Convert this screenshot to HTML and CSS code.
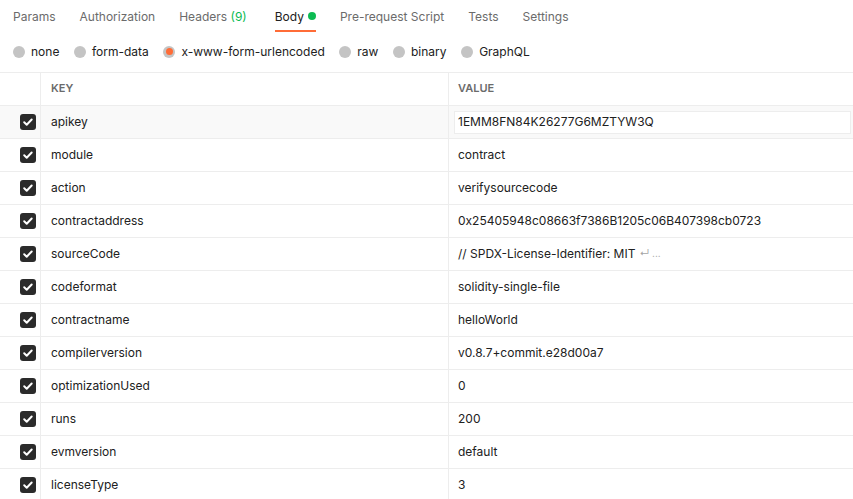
FILE: index.html
```html
<!DOCTYPE html>
<html>
<head>
<meta charset="utf-8">
<link rel="stylesheet" href="styles.css">
</head>
<body>
<div class="tabs">
  <div class="tab">Params</div>
  <div class="tab">Authorization</div>
  <div class="tab">Headers <span class="count">(9)</span></div>
  <div class="tab active">Body<span class="dot"></span></div>
  <div class="tab">Pre-request Script</div>
  <div class="tab">Tests</div>
  <div class="tab">Settings</div>
</div>
<div class="radios">
  <label class="radio"><span class="circle"></span>none</label>
  <label class="radio"><span class="circle"></span>form-data</label>
  <label class="radio"><span class="circle on"></span>x-www-form-urlencoded</label>
  <label class="radio"><span class="circle"></span>raw</label>
  <label class="radio"><span class="circle"></span>binary</label>
  <label class="radio"><span class="circle"></span>GraphQL</label>
</div>
<div class="table">
  <div class="row head">
    <div class="cell chk"></div>
    <div class="cell key">KEY</div>
    <div class="cell val">VALUE</div>
  </div>
  <div class="row hover">
    <div class="cell chk"><span class="box"><svg viewBox="0 0 16 16"><path d="M4.2 8.3l2.5 2.4 5-5.2" fill="none" stroke="#fff" stroke-width="2" stroke-linecap="round" stroke-linejoin="round"/></svg></span></div>
    <div class="cell key">apikey</div>
    <div class="cell val"><span class="input">1EMM8FN84K26277G6MZTYW3Q</span></div>
  </div>
  <div class="row">
    <div class="cell chk"><span class="box"><svg viewBox="0 0 16 16"><path d="M4.2 8.3l2.5 2.4 5-5.2" fill="none" stroke="#fff" stroke-width="2" stroke-linecap="round" stroke-linejoin="round"/></svg></span></div>
    <div class="cell key">module</div>
    <div class="cell val">contract</div>
  </div>
  <div class="row">
    <div class="cell chk"><span class="box"><svg viewBox="0 0 16 16"><path d="M4.2 8.3l2.5 2.4 5-5.2" fill="none" stroke="#fff" stroke-width="2" stroke-linecap="round" stroke-linejoin="round"/></svg></span></div>
    <div class="cell key">action</div>
    <div class="cell val">verifysourcecode</div>
  </div>
  <div class="row">
    <div class="cell chk"><span class="box"><svg viewBox="0 0 16 16"><path d="M4.2 8.3l2.5 2.4 5-5.2" fill="none" stroke="#fff" stroke-width="2" stroke-linecap="round" stroke-linejoin="round"/></svg></span></div>
    <div class="cell key">contractaddress</div>
    <div class="cell val">0x25405948c08663f7386B1205c06B407398cb0723</div>
  </div>
  <div class="row">
    <div class="cell chk"><span class="box"><svg viewBox="0 0 16 16"><path d="M4.2 8.3l2.5 2.4 5-5.2" fill="none" stroke="#fff" stroke-width="2" stroke-linecap="round" stroke-linejoin="round"/></svg></span></div>
    <div class="cell key">sourceCode</div>
    <div class="cell val">// SPDX-License-Identifier: MIT <span class="more">↵ ...</span></div>
  </div>
  <div class="row">
    <div class="cell chk"><span class="box"><svg viewBox="0 0 16 16"><path d="M4.2 8.3l2.5 2.4 5-5.2" fill="none" stroke="#fff" stroke-width="2" stroke-linecap="round" stroke-linejoin="round"/></svg></span></div>
    <div class="cell key">codeformat</div>
    <div class="cell val">solidity-single-file</div>
  </div>
  <div class="row">
    <div class="cell chk"><span class="box"><svg viewBox="0 0 16 16"><path d="M4.2 8.3l2.5 2.4 5-5.2" fill="none" stroke="#fff" stroke-width="2" stroke-linecap="round" stroke-linejoin="round"/></svg></span></div>
    <div class="cell key">contractname</div>
    <div class="cell val">helloWorld</div>
  </div>
  <div class="row">
    <div class="cell chk"><span class="box"><svg viewBox="0 0 16 16"><path d="M4.2 8.3l2.5 2.4 5-5.2" fill="none" stroke="#fff" stroke-width="2" stroke-linecap="round" stroke-linejoin="round"/></svg></span></div>
    <div class="cell key">compilerversion</div>
    <div class="cell val">v0.8.7+commit.e28d00a7</div>
  </div>
  <div class="row">
    <div class="cell chk"><span class="box"><svg viewBox="0 0 16 16"><path d="M4.2 8.3l2.5 2.4 5-5.2" fill="none" stroke="#fff" stroke-width="2" stroke-linecap="round" stroke-linejoin="round"/></svg></span></div>
    <div class="cell key">optimizationUsed</div>
    <div class="cell val">0</div>
  </div>
  <div class="row">
    <div class="cell chk"><span class="box"><svg viewBox="0 0 16 16"><path d="M4.2 8.3l2.5 2.4 5-5.2" fill="none" stroke="#fff" stroke-width="2" stroke-linecap="round" stroke-linejoin="round"/></svg></span></div>
    <div class="cell key">runs</div>
    <div class="cell val">200</div>
  </div>
  <div class="row">
    <div class="cell chk"><span class="box"><svg viewBox="0 0 16 16"><path d="M4.2 8.3l2.5 2.4 5-5.2" fill="none" stroke="#fff" stroke-width="2" stroke-linecap="round" stroke-linejoin="round"/></svg></span></div>
    <div class="cell key">evmversion</div>
    <div class="cell val">default</div>
  </div>
  <div class="row">
    <div class="cell chk"><span class="box"><svg viewBox="0 0 16 16"><path d="M4.2 8.3l2.5 2.4 5-5.2" fill="none" stroke="#fff" stroke-width="2" stroke-linecap="round" stroke-linejoin="round"/></svg></span></div>
    <div class="cell key">licenseType</div>
    <div class="cell val">3</div>
  </div>
</div>
</body>
</html>
```
FILE: styles.css
```css
* { box-sizing: border-box; }
html, body { margin: 0; padding: 0; background: #fff; overflow: hidden; }
body {
  font-family: Inter, "Noto Sans", sans-serif;
  font-size: 12px;
  color: #212121;
  width: 853px;
  height: 499px;
}
.tabs {
  display: flex;
  gap: 24px;
  padding-left: 13px;
  height: 32px;
}
.tab {
  display: flex;
  align-items: center;
  height: 32px;
  padding-top: 2px;
  color: #6b6b6b;
  border-bottom: 2px solid transparent;
  white-space: pre;
}
.tab.active {
  color: #212121;
  border-bottom-color: #ff6c37;
}
.count { color: #0cbb52; margin-right: 4px; }
.dot {
  width: 8px; height: 8px; border-radius: 50%;
  background: #0cbb52;
  margin-left: 4px;
}
.radios {
  display: flex;
  align-items: center;
  gap: 14.6px;
  padding-left: 13px;
  padding-bottom: 1px;
  height: 40px;
}
.radio {
  display: flex;
  align-items: center;
  gap: 6px;
  color: #212121;
}
.circle {
  width: 12px; height: 12px; border-radius: 50%;
  background: #c4c4c4;
  display: flex; align-items: center; justify-content: center;
}
.circle.on::after {
  content: "";
  width: 7px; height: 7px; border-radius: 50%;
  background: #ff6c37;
}
.table {
  border-top: 1px solid #ededed;
}
.row {
  display: grid;
  grid-template-columns: 41px 408px 1fr;
  height: 33px;
  border-bottom: 1px solid #ededed;
}
.row.hover { background: #f9f9f9; }
.cell {
  display: flex;
  align-items: center;
  padding-left: 10px;
  padding-bottom: 2px;
  border-right: 1px solid #ededed;
  white-space: nowrap;
}
.cell.val { border-right: none; padding-left: 9px; }
.cell.chk { padding-left: 20px; padding-bottom: 0; }
.head .cell { font-size: 11px; font-weight: 600; color: #6b6b6b; }
.box {
  width: 16px; height: 16px; border-radius: 3px;
  background: #2b2b2b;
  display: flex;
}
.box svg { width: 16px; height: 16px; }
.row.hover .cell.val { padding-left: 5px; padding-right: 2px; padding-bottom: 0; }
.input {
  display: flex; align-items: center;
  width: 100%;
  height: 23px;
  padding-left: 3px;
  padding-bottom: 1px;
  background: #fff;
  border: 1px solid #ededed;
}
.more { color: #a6a6a6; font-size: 10px; margin-left: 4px; }
```
